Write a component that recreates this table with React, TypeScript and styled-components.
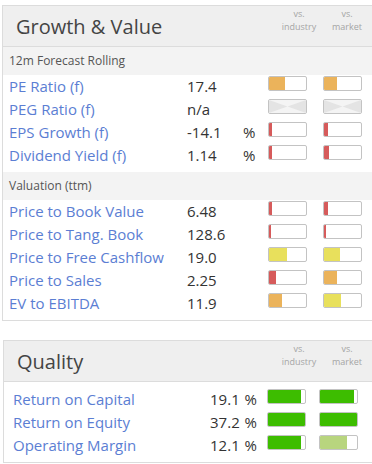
import { FC } from "react";
import styled, { createGlobalStyle } from "styled-components";

const GlobalStyle = createGlobalStyle`
  html, body {
    margin: 0;
    padding: 0;
    overflow: hidden;
    background: #fff;
    font-family: "Open Sans", "DejaVu Sans", sans-serif;
  }
`;

const Page = styled.div`
  padding: 5px 0 0 2px;
`;

// panels run off the right side of the frame, so no right border is drawn
const Panel = styled.div<{ $shift?: number }>`
  margin-left: ${(p) => p.$shift || 0}px;
  border: 1px solid #dcdcdc;
  border-right: none;
  background: #fff;
  & + & {
    margin-top: 19px;
  }
`;

const PanelHeader = styled.div`
  display: flex;
  align-items: center;
  height: 40px;
  padding: 0 1px 0 13px;
  background: #efefef;
  border-bottom: 1px solid #dcdcdc;
`;

const Title = styled.h2`
  margin: 0;
  font-size: 20px;
  font-weight: 400;
  color: #444;
`;

const VsLabels = styled.div`
  display: flex;
  align-self: flex-start;
  margin-left: auto;
  padding-top: 1px;
`;

const VsLabel = styled.div`
  width: 48px;
  text-align: center;
  font-size: 9px;
  line-height: 13px;
  color: #a5a5a5;
`;

const SectionHeader = styled.div`
  height: 28px;
  line-height: 28px;
  padding-left: 6px;
  background: #f3f3f3;
  font-size: 12px;
  color: #555;
`;

const Rows = styled.div<{ $top?: number }>`
  padding: ${(p) => p.$top || 0}px 0 5px;
`;

const Row = styled.div<{ $quality?: boolean }>`
  display: grid;
  grid-template-columns: ${(p) =>
    p.$quality ? "180px 74px 52px 52px" : "178px 56px 25px 55px 55px"};
  height: 23px;
  padding-left: ${(p) => (p.$quality ? 9 : 6)}px;
  font-size: 15px;
  line-height: 23px;
`;

const Label = styled.div`
  color: #5b7ed3;
  white-space: nowrap;
`;

const Value = styled.div<{ $right?: boolean }>`
  color: #333;
  white-space: nowrap;
  text-align: ${(p) => (p.$right ? "right" : "left")};
  padding-right: ${(p) => (p.$right ? 10 : 0)}px;
  word-spacing: ${(p) => (p.$right ? 1 : 0)}px;
`;

const BarCell = styled.div`
  padding-top: 1px;
`;

const BarBox = styled.div`
  display: flex;
  width: 37px;
  height: 13px;
  border: 1px solid #c3c3c3;
  border-radius: 2px;
  background: #fff;
  overflow: hidden;
`;

const BarFill = styled.div<{ $color: string }>`
  height: 100%;
  background: ${(p) => p.$color};
`;

const C = {
  orange: "#ebb35b",
  red: "#d65b5b",
  yellow: "#e8e05c",
  green: "#3dbd00",
  lime: "#b8d57e",
};

type BarVal = { w: number; c: string } | null;

const Bar: FC<{ v: BarVal }> = ({ v }) => (
  <BarCell>
    <BarBox>
      {v ? (
        <BarFill $color={v.c} style={{ width: v.w }} />
      ) : (
        <svg width="37" height="13" viewBox="0 0 37 13">
          <rect width="37" height="13" fill="#f4f4f4" />
          <polygon points="0,0 18.5,6.5 0,13" fill="#e4e4e4" />
          <polygon points="37,0 18.5,6.5 37,13" fill="#e4e4e4" />
        </svg>
      )}
    </BarBox>
  </BarCell>
);

type Metric = { label: string; value: string; unit?: string; ind: BarVal; mkt: BarVal };

const forecast: Metric[] = [
  { label: "PE Ratio (f)", value: "17.4", ind: { w: 16, c: C.orange }, mkt: { w: 13, c: C.orange } },
  { label: "PEG Ratio (f)", value: "n/a", ind: null, mkt: null },
  { label: "EPS Growth (f)", value: "-14.1", unit: "%", ind: { w: 3, c: C.red }, mkt: { w: 4, c: C.red } },
  { label: "Dividend Yield (f)", value: "1.14", unit: "%", ind: { w: 3, c: C.red }, mkt: { w: 5, c: C.red } },
];

const valuation: Metric[] = [
  { label: "Price to Book Value", value: "6.48", ind: { w: 3, c: C.red }, mkt: { w: 4, c: C.red } },
  { label: "Price to Tang. Book", value: "128.6", ind: { w: 2, c: C.red }, mkt: { w: 2, c: C.red } },
  { label: "Price to Free Cashflow", value: "19.0", ind: { w: 18, c: C.yellow }, mkt: { w: 16, c: C.yellow } },
  { label: "Price to Sales", value: "2.25", ind: { w: 7, c: C.red }, mkt: { w: 13, c: C.orange } },
  { label: "EV to EBITDA", value: "11.9", ind: { w: 13, c: C.orange }, mkt: { w: 17, c: C.yellow } },
];

const quality: Metric[] = [
  { label: "Return on Capital", value: "19.1 %", ind: { w: 33, c: C.green }, mkt: { w: 34, c: C.green } },
  { label: "Return on Equity", value: "37.2 %", ind: { w: 37, c: C.green }, mkt: { w: 37, c: C.green } },
  { label: "Operating Margin", value: "12.1 %", ind: { w: 33, c: C.green }, mkt: { w: 27, c: C.lime } },
];

const Header: FC<{ title: string }> = ({ title }) => (
  <PanelHeader>
    <Title>{title}</Title>
    <VsLabels>
      <VsLabel>
        vs.
        <br />
        industry
      </VsLabel>
      <VsLabel>
        vs.
        <br />
        market
      </VsLabel>
    </VsLabels>
  </PanelHeader>
);

const App: FC = () => {
  return (
    <>
      <GlobalStyle />
      <Page>
        <Panel>
          <Header title="Growth & Value" />
          <SectionHeader>12m Forecast Rolling</SectionHeader>
          <Rows>
            {forecast.map((m, i) => (
              <Row key={i}>
                <Label>{m.label}</Label>
                <Value>{m.value}</Value>
                <Value>{m.unit}</Value>
                <Bar v={m.ind} />
                <Bar v={m.mkt} />
              </Row>
            ))}
          </Rows>
          <SectionHeader>Valuation (ttm)</SectionHeader>
          <Rows>
            {valuation.map((m, i) => (
              <Row key={i}>
                <Label>{m.label}</Label>
                <Value>{m.value}</Value>
                <Value>{m.unit}</Value>
                <Bar v={m.ind} />
                <Bar v={m.mkt} />
              </Row>
            ))}
          </Rows>
        </Panel>
        <Panel $shift={1}>
          <Header title="Quality" />
          <Rows $top={6}>
            {quality.map((m, i) => (
              <Row key={i} $quality>
                <Label>{m.label}</Label>
                <Value $right>{m.value}</Value>
                <Bar v={m.ind} />
                <Bar v={m.mkt} />
              </Row>
            ))}
          </Rows>
        </Panel>
      </Page>
    </>
  );
};

export default App;
